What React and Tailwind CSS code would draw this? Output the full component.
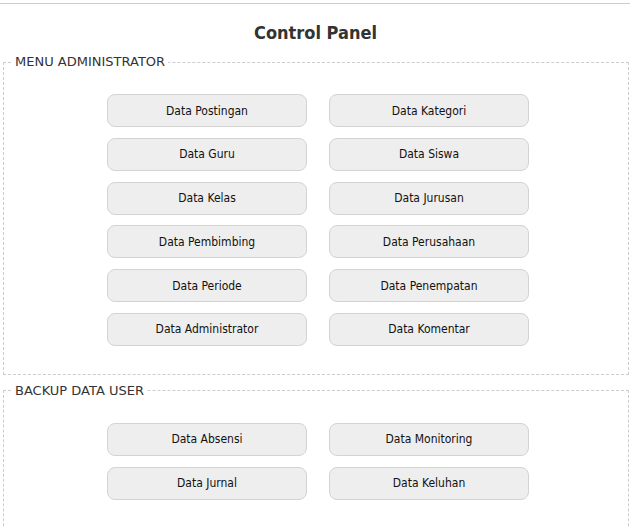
import React from "react";

const admin = [
  "Data Postingan", "Data Kategori",
  "Data Guru", "Data Siswa",
  "Data Kelas", "Data Jurusan",
  "Data Pembimbing", "Data Perusahaan",
  "Data Periode", "Data Penempatan",
  "Data Administrator", "Data Komentar",
];
const backup = ["Data Absensi", "Data Monitoring", "Data Jurnal", "Data Keluhan"];

function Btn({ label }) {
  return (
    <button className="w-[200px] h-[33px] rounded-[8px] bg-[#eeeeee] border border-[#d3d3d3] text-[12px] text-[#111] [font-family:'DejaVu_Sans_Condensed','DejaVu_Sans',sans-serif]">
      {label}
    </button>
  );
}

function Section({ title, items, className }) {
  return (
    <fieldset className={"mx-[3px] w-[626px] border border-dashed border-[#cccccc] pl-[8px] pr-[8px] " + className}>
      <legend className="px-[3px] text-[13px] leading-[16px] text-[#333] [font-family:'DejaVu_Sans',sans-serif]">
        {title}
      </legend>
      <div className="grid grid-cols-[200px_200px] gap-x-[22px] gap-y-[10.8px] justify-center pl-[4px]">
        {items.map((l) => (
          <Btn key={l} label={l} />
        ))}
      </div>
    </fieldset>
  );
}

export default function App() {
  return (
    <div className="w-[641px] h-[527px] bg-white overflow-hidden">
      <div className="pt-[3px]">
        <div className="w-[630px] border-t border-[#cccccc]" />
      </div>
      <h1 className="mt-[15px] mb-[8px] text-center text-[18px] font-bold text-[#333] [font-family:'DejaVu_Sans_Condensed','DejaVu_Sans',sans-serif] w-[631px]">
        Control Panel
      </h1>
      <Section title="MENU ADMINISTRATOR" items={admin} className="pt-[24px] pb-[28px]" />
      <Section title="BACKUP DATA USER" items={backup} className="mt-[8px] pt-[24px] pb-[40px]" />
    </div>
  );
}
